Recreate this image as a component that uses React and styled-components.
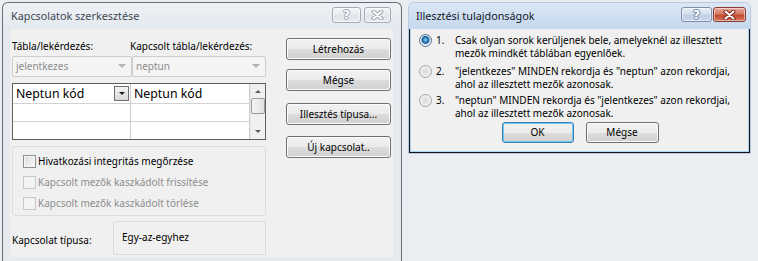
import styled, { createGlobalStyle } from "styled-components";

const GlobalStyle = createGlobalStyle`
  html, body {
    margin: 0;
    padding: 0;
    background: #eaedf1;
    overflow: hidden;
  }
  body {
    font-family: "Noto Sans", "Open Sans", sans-serif;
    font-size: 10px;
    line-height: 13px;
    color: #000;
  }
`;

const Desktop = styled.div`
  display: flex;
  align-items: flex-start;
  width: 758px;
  height: 261px;
  padding: 2px 0 0 2px;
  box-sizing: border-box;
`;

const Window = styled.div`
  display: flex;
  flex-direction: column;
  box-sizing: border-box;
  width: ${(p) => p.$w}px;
  height: ${(p) => p.$h}px;
  margin-left: ${(p) => p.$ml || 0}px;
  border: 1px solid ${(p) => (p.$active ? "#b9cbe2" : "#676c73")};
  border-bottom: ${(p) => (p.$open ? "none" : undefined)};
  border-radius: 6px 6px 0 0;
  background: ${(p) =>
    p.$active
      ? "linear-gradient(#dbe7f5, #c6d8ee 26px, #c9d9ed)"
      : "linear-gradient(#eef1f5, #e4e9ef 26px, #e6eaef)"};
  padding: ${(p) => p.$pad};
`;

const TitleBar = styled.div`
  display: flex;
  align-items: flex-start;
  justify-content: space-between;
  height: 26px;
  flex-shrink: 0;
  padding-left: ${(p) => p.$pl}px;
`;

const Title = styled.span`
  margin-top: 6px;
  font-size: 10.8px;
  line-height: 14px;
  color: ${(p) => (p.$active ? "#101a28" : "#3d4753")};
`;

const CaptionGroup = styled.div`
  display: flex;
  gap: ${(p) => p.$gap}px;
  margin-top: 4px;
  margin-right: ${(p) => p.$mr}px;
`;

const CaptionButton = styled.div`
  display: flex;
  align-items: center;
  justify-content: center;
  box-sizing: border-box;
  width: ${(p) => p.$w}px;
  height: ${(p) => p.$h || 16}px;
  border: 1px solid
    ${(p) => (p.$red ? "#8b3a31" : p.$active ? "#7d8fa8" : "#a4abb4")};
  border-radius: 3px;
  background: ${(p) =>
    p.$red
      ? "linear-gradient(#eaa897, #d67b64 45%, #c24a30 55%, #d4765c)"
      : p.$active
      ? "linear-gradient(#e7eff9, #d2deed 45%, #bfcee2 55%, #ccdaec)"
      : "linear-gradient(#f4f6f8, #e8ecf0 45%, #dfe4ea 55%, #e8ecf0)"};
  box-shadow: inset 0 0 0 1px rgba(255, 255, 255, 0.5);
`;

const HelpGlyph = styled.span`
  font-family: "DejaVu Sans", sans-serif;
  font-size: 12px;
  line-height: 12px;
  font-weight: bold;
  color: #fff;
  text-shadow: -1px 0 ${(p) => p.$edge}, 1px 0 ${(p) => p.$edge},
    0 -1px ${(p) => p.$edge}, 0 1px ${(p) => p.$edge};
`;

function CloseGlyph({ edge }) {
  return (
    <svg width="13" height="10" viewBox="0 0 13 10">
      <path
        d="M2.5 1.5 L10.5 8.5 M10.5 1.5 L2.5 8.5"
        stroke={edge}
        strokeWidth="4"
        strokeLinecap="round"
        fill="none"
      />
      <path
        d="M2.5 1.5 L10.5 8.5 M10.5 1.5 L2.5 8.5"
        stroke="#fff"
        strokeWidth="2"
        strokeLinecap="round"
        fill="none"
      />
    </svg>
  );
}

const Client = styled.div`
  flex: 1;
  display: flex;
  background: #f0f0f0;
  ${(p) =>
    p.$edged &&
    `
    border: 1px solid #151515;
    border-top: none;
    box-shadow: inset 1px 0 #a6d6f2, inset -1px 0 #a6d6f2, inset 0 -1px #a6d6f2;
  `}
`;

/* ---- left dialog ---- */

const LeftMain = styled.div`
  display: flex;
  flex-direction: column;
  width: 254px;
  padding: 10px 0 0 2px;
`;

const LabelRow = styled.div`
  display: flex;
  height: 14px;
  align-items: center;
`;

const Label = styled.span`
  width: ${(p) => p.$w}px;
  white-space: nowrap;
`;

const ComboRow = styled.div`
  display: flex;
  margin-top: 3px;
`;

const Combo = styled.div`
  display: flex;
  align-items: center;
  justify-content: space-between;
  box-sizing: border-box;
  width: ${(p) => p.$w}px;
  height: 21px;
  padding: 0 5px 1px 3px;
  border: 1px solid #cdcdcd;
  border-radius: 2px;
  background: #f4f4f4;
  color: #8d8d8d;
`;

const SmallArrow = styled.span`
  width: 0;
  height: 0;
  border-left: ${(p) => p.$s || 4}px solid transparent;
  border-right: ${(p) => p.$s || 4}px solid transparent;
  border-top: ${(p) => p.$s || 4}px solid ${(p) => p.$color || "#b4b4b4"};
`;

const Grid = styled.div`
  display: flex;
  box-sizing: border-box;
  width: 254px;
  height: 57px;
  margin-top: 6px;
  border: 1px solid #5f5f5f;
  background: #fff;
`;

const GridCols = styled.div`
  flex: 1;
  display: flex;
`;

const GridCol = styled.div`
  display: flex;
  flex-direction: column;
  width: ${(p) => p.$w}px;
  border-right: 1px solid #cccccc;
`;

const GridCell = styled.div`
  display: flex;
  align-items: center;
  justify-content: space-between;
  box-sizing: border-box;
  height: ${(p) => p.$h}px;
  padding: 0 1px 0 3px;
  border-bottom: ${(p) => (p.$last ? "none" : "1px solid #d2d2d2")};
  font-size: 12.3px;
  white-space: nowrap;
`;

const CellDrop = styled.span`
  display: flex;
  align-items: center;
  justify-content: center;
  box-sizing: border-box;
  width: 15px;
  height: 15px;
  border: 1px solid #6f6f6f;
  background: linear-gradient(#f4f4f4, #d9d9d9);
`;

const ScrollBar = styled.div`
  display: flex;
  flex-direction: column;
  align-items: center;
  width: 17px;
  background: #f0f0f0;
  border-left: 1px solid #e6e6e6;
`;

const ScrollArrow = styled.span`
  width: 0;
  height: 0;
  margin: ${(p) => (p.$up ? "6px 0 5px" : "auto 0 6px")};
  border-left: 3px solid transparent;
  border-right: 3px solid transparent;
  border-${(p) => (p.$up ? "bottom" : "top")}: 3px solid #5c5c5c;
`;

const Thumb = styled.span`
  box-sizing: border-box;
  width: 14px;
  height: 16px;
  border: 1px solid #9a9a9a;
  border-radius: 2px;
  background: linear-gradient(90deg, #f4f4f4, #e1e1e1);
`;

const Group = styled.div`
  display: flex;
  flex-direction: column;
  gap: 8px;
  box-sizing: border-box;
  width: 254px;
  height: 70px;
  margin-top: 6px;
  padding: 8px 0 0 10px;
  border: 1px solid #dcdcdc;
  border-radius: 3px;
`;

const CheckRow = styled.label`
  display: flex;
  align-items: center;
  gap: 2px;
  height: 13px;
  white-space: nowrap;
  color: ${(p) => (p.$disabled ? "#8d8d8d" : "#000")};
`;

const Box = styled.span`
  box-sizing: border-box;
  width: 13px;
  height: 13px;
  border: 1px solid ${(p) => (p.$disabled ? "#c8c8c8" : "#8e8f8f")};
  background: ${(p) =>
    p.$disabled ? "#f4f4f4" : "linear-gradient(135deg, #dadada, #fcfcfc)"};
  box-shadow: inset 0 0 0 1px ${(p) => (p.$disabled ? "#f1f1f1" : "#f6f6f6")};
`;

const TypeRow = styled.div`
  display: flex;
  margin-top: 5px;
  height: 34px;
`;

const TypeLabel = styled.span`
  display: flex;
  align-items: flex-end;
  width: 101px;
  padding-bottom: 8px;
  box-sizing: border-box;
`;

const TypeBox = styled.div`
  flex: 1;
  box-sizing: border-box;
  padding: 9px 0 0 8px;
  border: 1px solid #dadada;
  border-radius: 2px;
`;

const ButtonColumn = styled.div`
  display: flex;
  flex-direction: column;
  padding: 9px 0 0 20px;
`;

const PushButton = styled.button`
  box-sizing: border-box;
  width: ${(p) => p.$w || 105}px;
  height: ${(p) => p.$h || 22}px;
  margin-top: ${(p) => p.$mt || 0}px;
  padding: 0;
  border: 1px solid ${(p) => (p.$focus ? "#3c7fb1" : "#707070")};
  border-radius: 3px;
  background: linear-gradient(#f2f2f2, #ebebeb 50%, #dddddd 51%, #cfcfcf);
  box-shadow: inset 0 0 0 1px ${(p) => (p.$focus ? "#6cc8f0" : "#fbfbfb")};
  font-family: inherit;
  font-size: 10px;
  line-height: 13px;
  color: #000;
`;

/* ---- right dialog ---- */

const Options = styled.div`
  display: flex;
  flex-direction: column;
  width: 100%;
  padding: 5px 0 0 9px;
`;

const Option = styled.div`
  display: flex;
  align-items: flex-start;
  margin-bottom: ${(p) => p.$mb || 0}px;
  white-space: nowrap;
`;

const Radio = styled.span`
  box-sizing: border-box;
  width: 13px;
  height: 13px;
  border-radius: 50%;
  border: 1px solid ${(p) => (p.$on ? "#4f7193" : "#a3a3a3")};
  background: ${(p) =>
    p.$on
      ? "radial-gradient(circle at 50% 45%, #9fe2fc 0, #2f86c4 2px, #1c5f98 3.5px, #dfe7ef 4.5px, #f5f5f5 6px)"
      : "radial-gradient(circle, #d8d8d8 0, #e6e6e6 3px, #f7f7f7 6px)"};
`;

const Num = styled.span`
  width: 19px;
  margin-left: 4px;
`;

const DialogButtons = styled.div`
  display: flex;
  justify-content: center;
  gap: 12px;
  margin-top: 2px;
  padding-right: 8px;
`;

export default function App() {
  return (
    <>
      <GlobalStyle />
      <Desktop>
        <Window $w={400} $h={259} $pad="0 8px 4px 7px" $open>
          <TitleBar $pl={1}>
            <Title>Kapcsolatok szerkesztése</Title>
            <CaptionGroup $gap={3} $mr={2}>
              <CaptionButton $w={29}>
                <HelpGlyph $edge="#9aa3ad">?</HelpGlyph>
              </CaptionButton>
              <CaptionButton $w={27}>
                <CloseGlyph edge="#9aa3ad" />
              </CaptionButton>
            </CaptionGroup>
          </TitleBar>
          <Client>
            <LeftMain>
              <LabelRow>
                <Label $w={118}>Tábla/lekérdezés:</Label>
                <Label $w={136}>Kapcsolt tábla/lekérdezés:</Label>
              </LabelRow>
              <ComboRow>
                <Combo $w={120}>
                  jelentkezes
                  <SmallArrow />
                </Combo>
                <Combo $w={134}>
                  neptun
                  <SmallArrow />
                </Combo>
              </ComboRow>
              <Grid>
                <GridCols>
                  <GridCol $w={117}>
                    <GridCell $h={20}>
                      Neptun kód
                      <CellDrop>
                        <SmallArrow $s={3} $color="#1e1e1e" />
                      </CellDrop>
                    </GridCell>
                    <GridCell $h={18} />
                    <GridCell $h={17} $last />
                  </GridCol>
                  <GridCol $w={118}>
                    <GridCell $h={20}>Neptun kód</GridCell>
                    <GridCell $h={18} />
                    <GridCell $h={17} $last />
                  </GridCol>
                </GridCols>
                <ScrollBar>
                  <ScrollArrow $up />
                  <Thumb />
                  <ScrollArrow />
                </ScrollBar>
              </Grid>
              <Group>
                <CheckRow>
                  <Box />
                  Hivatkozási integritás megőrzése
                </CheckRow>
                <CheckRow $disabled>
                  <Box $disabled />
                  Kapcsolt mezők kaszkádolt frissítése
                </CheckRow>
                <CheckRow $disabled>
                  <Box $disabled />
                  Kapcsolt mezők kaszkádolt törlése
                </CheckRow>
              </Group>
              <TypeRow>
                <TypeLabel>Kapcsolat típusa:</TypeLabel>
                <TypeBox>Egy-az-egyhez</TypeBox>
              </TypeRow>
            </LeftMain>
            <ButtonColumn>
              <PushButton>Létrehozás</PushButton>
              <PushButton $mt={9}>Mégse</PushButton>
              <PushButton $mt={12}>Illesztés típusa...</PushButton>
              <PushButton $mt={11}>Új kapcsolat..</PushButton>
            </ButtonColumn>
          </Client>
        </Window>

        <Window $active $w={343} $h={152} $ml={6} $pad="0">
          <TitleBar $pl={7}>
            <Title $active>Illesztési tulajdonságok</Title>
            <CaptionGroup $gap={1} $mr={4}>
              <CaptionButton $active $w={31} $h={15}>
                <HelpGlyph $edge="#6f86a3">?</HelpGlyph>
              </CaptionButton>
              <CaptionButton $red $w={33} $h={15}>
                <CloseGlyph edge="#7a2418" />
              </CaptionButton>
            </CaptionGroup>
          </TitleBar>
          <Client $edged>
            <Options>
              <Option $mb={5}>
                <Radio $on />
                <Num>1.</Num>
                <span>
                  Csak olyan sorok kerüljenek bele, amelyeknél az illesztett
                  <br />
                  mezők mindkét táblában egyenlőek.
                </span>
              </Option>
              <Option $mb={3}>
                <Radio />
                <Num>2.</Num>
                <span>
                  "jelentkezes" MINDEN rekordja és "neptun" azon rekordjai,
                  <br />
                  ahol az illesztett mezők azonosak.
                </span>
              </Option>
              <Option>
                <Radio />
                <Num>3.</Num>
                <span>
                  "neptun" MINDEN rekordja és "jelentkezes" azon rekordjai,
                  <br />
                  ahol az illesztett mezők azonosak.
                </span>
              </Option>
              <DialogButtons>
                <PushButton $focus $w={72} $h={21}>
                  OK
                </PushButton>
                <PushButton $w={73} $h={21}>
                  Mégse
                </PushButton>
              </DialogButtons>
            </Options>
          </Client>
        </Window>
      </Desktop>
    </>
  );
}
